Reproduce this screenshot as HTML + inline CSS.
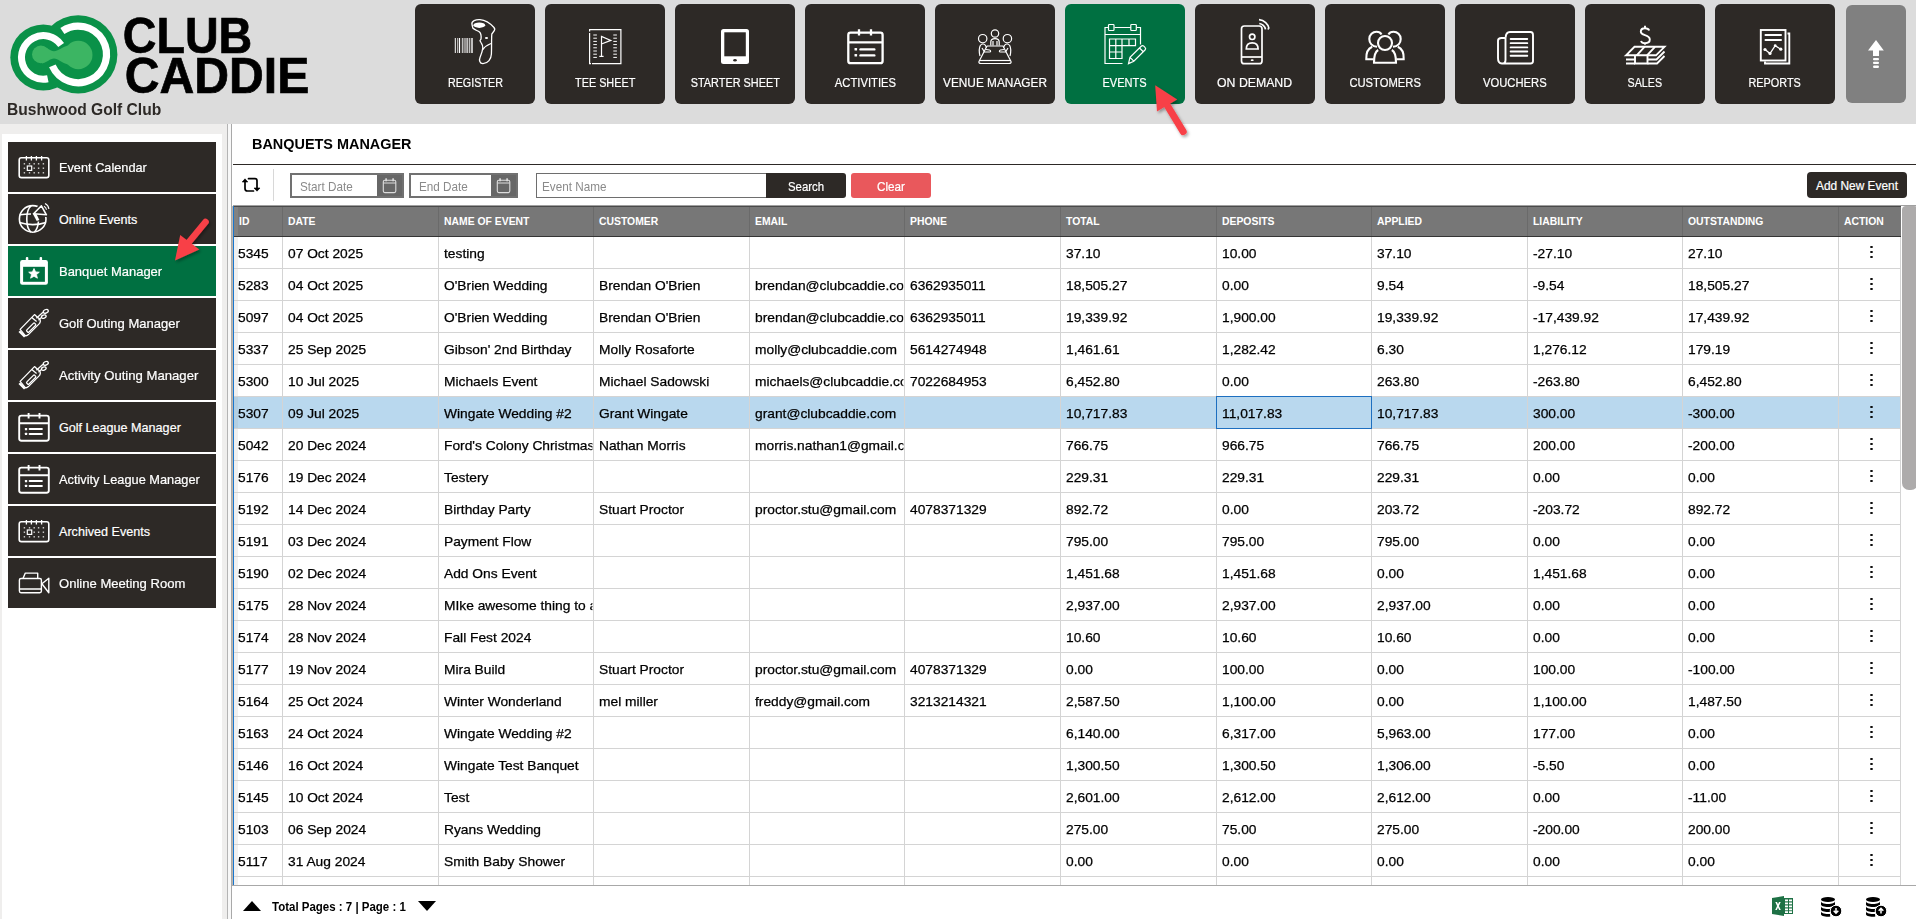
<!DOCTYPE html><html><head><meta charset="utf-8"><style>
*{margin:0;padding:0;box-sizing:border-box}
html,body{width:1916px;height:919px;overflow:hidden;background:#fff;font-family:"Liberation Sans",sans-serif;color:#000}
.a{position:absolute}
.t{position:absolute;white-space:nowrap;line-height:1}
.nb{position:absolute;top:4px;width:120px;height:100px;background:#2d2926;border-radius:6px}
.nb svg{position:absolute;left:30px;top:6px}
.nl{position:absolute;left:0;width:120px;top:73px;text-align:center;color:#fff;-webkit-text-stroke:.2px #fff;font-size:12.3px;line-height:1}
.nl span{display:inline-block;transform:scaleX(.87);transform-origin:50% 50%}
.si{position:absolute;left:8px;width:208px;height:50px;background:#2d2926}
.si svg{position:absolute;left:0;top:0}
.sl{position:absolute;left:51px;top:20px;color:#fff;-webkit-text-stroke:.2px #fff;font-size:12.6px;line-height:1;white-space:nowrap}
.hl{position:absolute;top:207px;height:29px;width:1px;background:#6a6a6a}
.vl{position:absolute;top:237px;height:648px;width:1px;background:#d4d4d4}
.rl{position:absolute;left:233px;width:1667px;height:1px;background:#d4d4d4}
.ht{position:absolute;top:217px;color:#fff;font-weight:bold;font-size:10.4px;line-height:1;white-space:nowrap}
.ct{position:absolute;transform:scaleX(1.06);transform-origin:0 0;font-size:13px;-webkit-text-stroke:.25px #000;line-height:1;white-space:nowrap;overflow:hidden}
.kb{position:absolute;left:1870px;width:3px}
.kb i{display:block;width:3px;height:1.9px;background:#000;border-radius:50%;margin-bottom:2.95px}
</style></head><body>
<div class="a" style="left:0;top:0;width:1916px;height:124px;background:#dcdcdc"></div>
<svg class="a" style="left:0;top:0" width="320" height="124" viewBox="0 0 320 124">
<circle cx="43.3" cy="57.4" r="33" fill="#0a9148"/><circle cx="78.2" cy="54.4" r="39.2" fill="#0a9148"/>
<path d="M61.16 44.9 A21.8 21.8 0 1 0 47.83 78.72" fill="none" stroke="#fff" stroke-width="7"/>
<path d="M62.37 30.94 A28.3 28.3 0 1 1 52.35 65.91" fill="none" stroke="#fff" stroke-width="7.2"/>
<circle cx="40.8" cy="54.4" r="8.8" fill="#3cb563"/><circle cx="78.3" cy="55" r="14.2" fill="#3cb563"/>
<path d="M42 46 C47 47 50 51 54 51.3 C58 51.3 62 47 68 45.5 L68 64.5 C62 63 58 58.5 54 58.5 C50 58.5 47 62.5 42 63.5 Z" fill="#3cb563"/>
<text x="122.8" y="52.8" font-family="Liberation Sans" font-weight="bold" font-size="50" textLength="129.5" lengthAdjust="spacingAndGlyphs" fill="#000" stroke="#000" stroke-width=".7">CLUB</text>
<text x="124.8" y="92.5" font-family="Liberation Sans" font-weight="bold" font-size="50" textLength="184.5" lengthAdjust="spacingAndGlyphs" fill="#000" stroke="#000" stroke-width=".7">CADDIE</text>
</svg>
<div class="t" style="left:7.3px;top:102.2px;font-size:16px;font-weight:bold;color:#2d2926;transform:scaleX(.975);transform-origin:0 0">Bushwood Golf Club</div>
<div class="nb" style="left:415px;background:#2d2926"><svg width="60" height="60" viewBox="0 0 60 60"><g fill="none" stroke="#fff" stroke-width="1.3">
<path d="M27 14.5 C26 11 31 9.3 35 9.6 C40 10 45 13 49 17.5 C50.3 19 49.8 20.5 48.3 22 L46.8 24 C46.4 30 46.7 38 46.4 44 C46.2 49 43 53.5 38 53.6 C34.5 53.7 34 50 35 47.5 C36.5 44 37.5 41 37.8 38 C38 35 37 34 36 32.5 L35 30.8 L36 29 C36.3 26.5 36 23.5 34.5 22 C32.5 20.5 29.5 20 27.8 18 Z"/>
<path d="M37.5 40 C39.5 37 42.5 34.8 46 33.5"/></g>
<ellipse cx="34.3" cy="15.2" rx="5.9" ry="2.7" fill="#fff"/>
<ellipse cx="41.5" cy="28" rx="1.6" ry="1.1" fill="#fff"/>
<g fill="#fff"><rect x="9.8" y="28" width="1" height="15"/><rect x="12" y="28" width="0.8" height="15" opacity=".8"/><rect x="13.8" y="28" width="1.3" height="15"/><rect x="16.8" y="28" width="1.2" height="15" opacity=".7"/><rect x="18.6" y="28" width="1" height="15" opacity=".8"/><rect x="20.3" y="28" width="1.4" height="15" opacity=".7"/><rect x="22.3" y="28" width="0.9" height="15"/><rect x="24" y="28" width="1.3" height="15" opacity=".7"/><rect x="26.3" y="28" width="1.4" height="15"/></g></svg><div class="nl"><span style="transform:scaleX(0.876)">REGISTER</span></div></div>
<div class="nb" style="left:545px;background:#2d2926"><svg width="60" height="60" viewBox="0 0 60 60"><g fill="none" stroke="#fff" stroke-width="1.2">
<path d="M17 53.7 L45.9 53.7 L45.9 19.6 L14.6 19.6 L14.6 21.5 M14.6 23 L14.6 53.7 L16 53.7"/>
<path d="M26.5 46.3 L26.5 26.5 L35.8 30.4 L26.5 34"/><path d="M24.3 46.4 L28.6 46.4"/></g>
<g stroke="#fff" stroke-width="1" stroke-linecap="round"><path d="M18.7 25.0 H21.5 M38.7 25.0 H41.5"/><path d="M18.7 28.2 H21.5 M38.7 28.2 H41.5"/><path d="M18.7 31.4 H21.5 M38.7 31.4 H41.5"/><path d="M18.7 34.6 H21.5 M38.7 34.6 H41.5"/><path d="M18.7 37.8 H21.5 M38.7 37.8 H41.5"/><path d="M18.7 41.0 H21.5 M38.7 41.0 H41.5"/><path d="M18.7 44.2 H21.5 M38.7 44.2 H41.5"/><path d="M18.7 47.4 H21.5 M38.7 47.4 H41.5"/></g></svg><div class="nl"><span style="transform:scaleX(0.881)">TEE SHEET</span></div></div>
<div class="nb" style="left:675px;background:#2d2926"><svg width="60" height="60" viewBox="0 0 60 60"><rect x="16" y="19" width="28" height="35" rx="2.5" fill="#fff"/>
<rect x="19.3" y="22.3" width="21.5" height="24" fill="#2d2926"/>
<ellipse cx="30" cy="50.3" rx="1.8" ry="1.2" fill="#2d2926"/></svg><div class="nl"><span style="transform:scaleX(0.886)">STARTER SHEET</span></div></div>
<div class="nb" style="left:805px;background:#2d2926"><svg width="60" height="60" viewBox="0 0 60 60"><g fill="none" stroke="#fff" stroke-width="2.3">
<rect x="13.3" y="22.7" width="34.3" height="30.5" rx="2.2"/><path d="M13.3 32.3 H47.6"/>
<path d="M24 19.3 V25.6 M36 19.3 V25.6"/></g>
<g fill="#fff"><rect x="19.5" y="38" width="2.6" height="2.6" rx=".6"/><rect x="19.5" y="44" width="2.6" height="2.6" rx=".6"/>
<rect x="24.3" y="38.2" width="16.2" height="2.4" rx="1.2"/><rect x="24.3" y="44.2" width="16.2" height="2.4" rx="1.2"/></g></svg><div class="nl"><span style="transform:scaleX(0.915)">ACTIVITIES</span></div></div>
<div class="nb" style="left:935px;background:#2d2926"><svg width="60" height="60" viewBox="0 0 60 60"><g fill="none" stroke="#fff" stroke-width="1.2">
<circle cx="30" cy="23.5" r="3.7"/><circle cx="17.7" cy="28.7" r="4.2"/><circle cx="42.4" cy="28.7" r="4.2"/>
<path d="M25.8 35.5 V32 C25.8 29.6 27.5 28.6 30 28.6 C32.5 28.6 34.2 29.6 34.2 32 V35.5 M28 35.5 V31 M32 35.5 V31"/>
<path d="M15 46 C14 42 14 38 15.3 35.5 C16.5 33.5 19.5 33.5 20.5 35.5 L21.5 37.5"/>
<path d="M45 46 C46 42 46 38 44.7 35.5 C43.5 33.5 40.5 33.5 39.5 35.5 L38.5 37.5"/>
<path d="M17 38 L19.5 42 L24.5 42 C26 42 26 40.5 24.5 40 L21 39.5"/>
<path d="M43 38 L40.5 42 L35.5 42 C34 42 34 40.5 35.5 40 L39 39.5"/>
<path d="M22 36 L38 36 L46 51.5 C46.5 53 45.5 53.5 44 53.5 L16 53.5 C14.5 53.5 13.5 53 14 51.5 L22 36"/>
<path d="M15 50.5 H45"/></g></svg><div class="nl"><span style="transform:scaleX(0.963)">VENUE MANAGER</span></div></div>
<div class="nb" style="left:1065px;background:#007041"><svg width="60" height="60" viewBox="0 0 60 60"><g fill="none" stroke="#fff" stroke-width="1.2">
<path d="M27.5 53.5 H10 V17.5 H13.5 M19.5 17.5 H35.8 M41.7 17.5 H45.5 V34.5"/>
<path d="M10 24.5 H45.5"/>
<rect x="13.5" y="14.5" width="5.5" height="6" rx=".8"/><rect x="35.8" y="14.5" width="5.5" height="6" rx=".8"/>
<path d="M14.5 29 H40.5 V35.6 H27 V48.5 H14.5 Z M14.5 35.6 H27 M14.5 42 H27 M20.8 29 V48.5 M27 29 V35.6 M34 29 V35.6"/>
<path d="M33.5 53.6 L35 47.3 L46.2 36.2 C47 35.4 48 35.4 48.8 36.2 L50 37.4 C50.8 38.2 50.8 39.2 50 40 L38.8 51.2 Z M35 47.3 L38.8 51.2 M44.5 38 L48.3 41.7"/></g></svg><div class="nl"><span style="transform:scaleX(0.898)">EVENTS</span></div></div>
<div class="nb" style="left:1195px;background:#2d2926"><svg width="60" height="60" viewBox="0 0 60 60"><g fill="none" stroke="#fff" stroke-width="1.7">
<rect x="16.5" y="16" width="20.5" height="37.7" rx="2.8"/><path d="M16.5 47 H37"/>
<circle cx="27.2" cy="26.8" r="2.7"/><path d="M21.3 39 C21.3 34.8 24 32.8 27.2 32.8 C30.4 32.8 33.1 34.8 33.1 39 Z"/>
<path d="M34.3 13.5 C37.2 13.8 40 16.5 40.5 19.3 M34 9.6 C39 10 43.5 14 44 18.6"/></g>
<ellipse cx="27.2" cy="50.2" rx="1.5" ry="0.9" fill="#fff"/><circle cx="43.3" cy="18.8" r="0.9" fill="#fff"/></svg><div class="nl"><span style="transform:scaleX(0.999)">ON DEMAND</span></div></div>
<div class="nb" style="left:1325px;background:#2d2926"><svg width="60" height="60" viewBox="0 0 60 60"><g fill="none" stroke="#fff" stroke-width="2.1">
<path d="M26.5 24.5 C25.5 22.5 23.8 21.8 21.5 21.8 C17.7 21.8 14.3 24.7 14.3 29 C14.3 33 17.2 36.7 22 36.7"/>
<path d="M33.5 24.5 C34.5 22.5 36.2 21.8 38.5 21.8 C42.3 21.8 45.7 24.7 45.7 29 C45.7 33 42.8 36.7 38 36.7"/>
<circle cx="30" cy="33" r="7"/>
<path d="M17.2 36.8 C12 39 11 43.5 11.3 49.3 H18.5"/><path d="M42.8 36.8 C48 39 49 43.5 48.7 49.3 H41.5"/>
<path d="M23.2 40 C19.5 42 19 47 19 52.7 H41 C41 47 40.5 42 36.8 40"/></g></svg><div class="nl"><span style="transform:scaleX(0.913)">CUSTOMERS</span></div></div>
<div class="nb" style="left:1455px;background:#2d2926"><svg width="60" height="60" viewBox="0 0 60 60"><g fill="none" stroke="#fff" stroke-width="1.9">
<path d="M20.7 27.8 C20.7 24 22 22 25 22 H45.5 C47.5 22 48 23 48 25 V51 C48 53 47 53.5 45.5 53.5 H17 C14 53.5 13 51.5 13 48 V30.7 C13 28.5 14 28 16.5 28 H20.7 M20.5 28 V50 C20.5 53 18.5 53.5 17 53.5"/></g>
<g fill="#fff"><rect x="24.7" y="28.0" width="18.5" height="1.9" rx=".9"/><rect x="24.7" y="32.2" width="18.5" height="1.9" rx=".9"/><rect x="24.7" y="36.4" width="18.5" height="1.9" rx=".9"/><rect x="24.7" y="40.6" width="18.5" height="1.9" rx=".9"/><rect x="24.7" y="44.8" width="18.5" height="1.9" rx=".9"/></g></svg><div class="nl"><span style="transform:scaleX(0.915)">VOUCHERS</span></div></div>
<div class="nb" style="left:1585px;background:#2d2926"><svg width="60" height="60" viewBox="0 0 60 60"><path d="M34.2 20.5 C33.5 18.8 32 18.3 30 18.3 C27.5 18.3 25.8 19.8 25.8 21.8 C25.8 26.3 34.8 24 34.8 29.5 C34.8 31.7 33 33.2 30 33.2 C28 33.2 26.5 32.5 26 31 M30 15.7 V18.3 M30 33.2 V34.8" fill="none" stroke="#fff" stroke-width="1.9"/>
<g fill="none" stroke="#fff" stroke-width="1.9">
<path d="M11 45.3 L19.5 36.8 H49.5 L41 45.3 Z"/><path d="M21.7 45.3 L29.5 36.8 M32 45.3 L40 36.8"/>
<path d="M11 49.5 H20 M32.5 49.5 H41.5 L49.5 41.5"/><path d="M11 53.5 H20 M32.5 53.5 H42 L49.5 46"/>
<path d="M20 45.3 V53.5 H32.5 V45.3"/></g></svg><div class="nl"><span style="transform:scaleX(0.872)">SALES</span></div></div>
<div class="nb" style="left:1715px;background:#2d2926"><svg width="60" height="60" viewBox="0 0 60 60"><g fill="none" stroke="#fff" stroke-width="1.9">
<rect x="15.8" y="20" width="24.7" height="30.5"/><path d="M42.5 23.5 H44.3 V53.5 H20 V51.5"/></g>
<g fill="#fff"><rect x="19.5" y="24" width="17.5" height="1.9" rx=".9"/><rect x="19.5" y="29" width="17.5" height="1.9" rx=".9"/>
<circle cx="20" cy="39.5" r="1.6"/><circle cx="25" cy="43.5" r="1.6"/><circle cx="30.2" cy="35.7" r="1.4"/><circle cx="35.8" cy="39.2" r="1.6"/></g>
<path d="M20 39.5 L25 43.5 L30.2 35.7 L35.8 39.2" fill="none" stroke="#fff" stroke-width="1.3"/></svg><div class="nl"><span style="transform:scaleX(0.885)">REPORTS</span></div></div>
<div class="a" style="left:1846px;top:5px;width:60px;height:98px;background:#808080;border-radius:6px"></div>
<svg class="a" style="left:1846px;top:20px" width="60" height="60" viewBox="0 0 60 60">
<path d="M30 20 L37.8 30.5 H33 V36 H27 V30.5 H22 Z" fill="#fff"/>
<rect x="27" y="38" width="6" height="2.2" rx="1" fill="#fff"/><rect x="27" y="41.8" width="6" height="2.2" rx="1" fill="#fff"/><rect x="27" y="45.6" width="6" height="2.4" rx="1.2" fill="#fff"/>
</svg>
<div class="a" style="left:0;top:124px;width:232px;height:795px;background:#efeeed"></div>
<div class="a" style="left:2px;top:134px;width:220px;height:785px;background:#fff"></div>
<div class="a" style="left:227px;top:124px;width:1px;height:795px;background:#b4b4b4"></div>
<div class="a" style="left:228px;top:124px;width:3px;height:795px;background:#f8f8f8"></div>
<div class="a" style="left:231px;top:124px;width:1px;height:795px;background:#a9a9a9"></div>
<div class="a" style="left:232px;top:206px;width:1px;height:680px;background:#bdb6b0"></div>
<div class="si" style="top:142px;background:#2d2926"><svg width="50" height="50" viewBox="0 0 50 50"><rect x="11.2" y="15.7" width="29.6" height="19.9" rx="2.2" fill="none" stroke="#fff" stroke-width="1.6"/>
<g stroke="#fff" stroke-width="1.3"><path d="M18.4 14 V18.4 M23.4 14 V18.4 M28.4 14 V18.4 M33.6 14 V18.4"/></g>
<g fill="#fff"><rect x="15.7" y="21.1" width="1.4" height="1.4" opacity=".8"/><rect x="20.8" y="21.1" width="1.4" height="1.4" opacity=".8"/><rect x="25.5" y="21.1" width="1.4" height="1.4" opacity=".8"/><rect x="29.9" y="21.1" width="1.4" height="1.4" opacity=".8"/><rect x="34.7" y="21.1" width="1.4" height="1.4" opacity=".8"/><rect x="15.7" y="25.5" width="1.4" height="1.4" opacity=".8"/><rect x="25.5" y="25.5" width="1.4" height="1.4" opacity=".8"/><rect x="29.9" y="25.5" width="1.4" height="1.4" opacity=".8"/><rect x="34.7" y="25.5" width="1.4" height="1.4" opacity=".8"/><rect x="15.7" y="30.1" width="1.4" height="1.4" opacity=".8"/><rect x="20.8" y="30.1" width="1.4" height="1.4" opacity=".8"/><rect x="25.5" y="30.1" width="1.4" height="1.4" opacity=".8"/><rect x="29.9" y="30.1" width="1.4" height="1.4" opacity=".8"/><rect x="34.7" y="30.1" width="1.4" height="1.4" opacity=".8"/></g>
<rect x="19.3" y="24" width="4.4" height="4.4" fill="none" stroke="#fff" stroke-width="1.2"/></svg><div class="sl" style="transform:scaleX(1.012);transform-origin:0 0">Event Calendar</div></div>
<div class="si" style="top:194px;background:#2d2926"><svg width="50" height="50" viewBox="0 0 50 50"><g fill="none" stroke="#fff" stroke-width="1.6"><circle cx="24.7" cy="24.9" r="13.3"/>
<path d="M23.2 11.8 C17.3 16 17.3 34 23.2 38.1"/><path d="M30.4 27.5 C30.2 31.5 29 35.5 26.3 38.1"/>
<path d="M11.9 20.8 C15 20.3 19 20 23 20"/><path d="M11.5 28.5 C16 30 20 30.6 24.7 30.6 C29.5 30.6 34 29.8 37.9 28.4"/></g>
<path d="M25.6 19.7 L33.4 11.8 L38.4 20.8 Z" fill="#2d2926" stroke="#2d2926" stroke-width="4.5" stroke-linejoin="round"/><path d="M25.6 19.7 L33.4 11.8 L38.4 20.8 Z" fill="#2d2926" stroke="#fff" stroke-width="1.6" stroke-linejoin="round"/>
<path d="M24.6 19.2 L28.2 19.6 L31.4 25.9 L28.7 26.9 Z" fill="#fff"/>
<path d="M36 12.2 C37.5 13 38.3 14.3 38.5 15.8 M37 9.5 C39.3 10.6 40.6 12.6 40.9 15" fill="none" stroke="#fff" stroke-width="1.1"/></svg><div class="sl" style="transform:scaleX(1);transform-origin:0 0">Online Events</div></div>
<div class="si" style="top:246px;background:#007041"><svg width="50" height="50" viewBox="0 0 50 50"><rect x="12.1" y="14" width="27.8" height="24.8" rx="2.2" fill="#fff"/><rect x="17.8" y="11" width="2.5" height="4" rx="1" fill="#fff"/><rect x="31.6" y="11" width="2.5" height="4" rx="1" fill="#fff"/>
<rect x="15.1" y="20.8" width="21.8" height="15" fill="#007041"/>
<path d="M26 22.5 L27.6 25.9 L31.3 26.2 L28.5 28.6 L29.4 32.2 L26 30.3 L22.6 32.2 L23.5 28.6 L20.7 26.2 L24.4 25.9 Z" fill="#fff" stroke="#fff" stroke-width=".8" stroke-linejoin="round"/></svg><div class="sl" style="transform:scaleX(1.03);transform-origin:0 0">Banquet Manager</div></div>
<div class="si" style="top:298px;background:#2d2926"><svg width="50" height="50" viewBox="0 0 50 50"><g fill="none" stroke="#fff" stroke-width="1.3" stroke-linejoin="round"><path d="M12.1 31.4 L26.5 16.6 L29.9 19.7 C32.5 21 33 23 31.6 25.4 L20.4 36.6 C19.3 37.6 18.3 38 17.3 37.6 Z"/>
<path d="M11.3 33.3 L16.8 38.8" stroke-width="2.2"/><path d="M23.8 19.4 L28.6 23.6"/>
<rect x="17.6" y="28.2" width="11.2" height="3" rx="1" transform="rotate(-45 23.2 29.7)"/>
<path d="M28.4 20.3 L35 14.3 M30.5 22.3 L33.5 19.4"/>
<ellipse cx="37.8" cy="13.3" rx="2.6" ry="1.7" transform="rotate(-25 37.8 13.3)"/><ellipse cx="35.8" cy="18.6" rx="2.4" ry="1.6" transform="rotate(-20 35.8 18.6)"/></g></svg><div class="sl" style="transform:scaleX(1.033);transform-origin:0 0">Golf Outing Manager</div></div>
<div class="si" style="top:350px;background:#2d2926"><svg width="50" height="50" viewBox="0 0 50 50"><g fill="none" stroke="#fff" stroke-width="1.3" stroke-linejoin="round"><path d="M12.1 31.4 L26.5 16.6 L29.9 19.7 C32.5 21 33 23 31.6 25.4 L20.4 36.6 C19.3 37.6 18.3 38 17.3 37.6 Z"/>
<path d="M11.3 33.3 L16.8 38.8" stroke-width="2.2"/><path d="M23.8 19.4 L28.6 23.6"/>
<rect x="17.6" y="28.2" width="11.2" height="3" rx="1" transform="rotate(-45 23.2 29.7)"/>
<path d="M28.4 20.3 L35 14.3 M30.5 22.3 L33.5 19.4"/>
<ellipse cx="37.8" cy="13.3" rx="2.6" ry="1.7" transform="rotate(-25 37.8 13.3)"/><ellipse cx="35.8" cy="18.6" rx="2.4" ry="1.6" transform="rotate(-20 35.8 18.6)"/></g></svg><div class="sl" style="transform:scaleX(1.042);transform-origin:0 0">Activity Outing Manager</div></div>
<div class="si" style="top:402px;background:#2d2926"><svg width="50" height="50" viewBox="0 0 50 50"><g fill="none" stroke="#fff" stroke-width="1.9"><rect x="11.2" y="13.6" width="29.6" height="25.2" rx="2.2"/><path d="M11.2 21.2 H40.8 M20.6 11 V16.6 M31.5 11 V16.6"/></g>
<g fill="#fff"><rect x="16.9" y="25.9" width="2.3" height="2.3" rx=".5"/><rect x="16.9" y="30.8" width="2.3" height="2.3" rx=".5"/><rect x="20.6" y="26" width="14.3" height="2.1" rx="1"/><rect x="20.6" y="30.9" width="14.3" height="2.1" rx="1"/></g></svg><div class="sl" style="transform:scaleX(1);transform-origin:0 0">Golf League Manager</div></div>
<div class="si" style="top:454px;background:#2d2926"><svg width="50" height="50" viewBox="0 0 50 50"><g fill="none" stroke="#fff" stroke-width="1.9"><rect x="11.2" y="13.6" width="29.6" height="25.2" rx="2.2"/><path d="M11.2 21.2 H40.8 M20.6 11 V16.6 M31.5 11 V16.6"/></g>
<g fill="#fff"><rect x="16.9" y="25.9" width="2.3" height="2.3" rx=".5"/><rect x="16.9" y="30.8" width="2.3" height="2.3" rx=".5"/><rect x="20.6" y="26" width="14.3" height="2.1" rx="1"/><rect x="20.6" y="30.9" width="14.3" height="2.1" rx="1"/></g></svg><div class="sl" style="transform:scaleX(1.016);transform-origin:0 0">Activity League Manager</div></div>
<div class="si" style="top:506px;background:#2d2926"><svg width="50" height="50" viewBox="0 0 50 50"><rect x="11.2" y="15.7" width="29.6" height="19.9" rx="2.2" fill="none" stroke="#fff" stroke-width="1.6"/>
<g stroke="#fff" stroke-width="1.3"><path d="M18.4 14 V18.4 M23.4 14 V18.4 M28.4 14 V18.4 M33.6 14 V18.4"/></g>
<g fill="#fff"><rect x="15.7" y="21.1" width="1.4" height="1.4" opacity=".8"/><rect x="20.8" y="21.1" width="1.4" height="1.4" opacity=".8"/><rect x="25.5" y="21.1" width="1.4" height="1.4" opacity=".8"/><rect x="29.9" y="21.1" width="1.4" height="1.4" opacity=".8"/><rect x="34.7" y="21.1" width="1.4" height="1.4" opacity=".8"/><rect x="15.7" y="25.5" width="1.4" height="1.4" opacity=".8"/><rect x="25.5" y="25.5" width="1.4" height="1.4" opacity=".8"/><rect x="29.9" y="25.5" width="1.4" height="1.4" opacity=".8"/><rect x="34.7" y="25.5" width="1.4" height="1.4" opacity=".8"/><rect x="15.7" y="30.1" width="1.4" height="1.4" opacity=".8"/><rect x="20.8" y="30.1" width="1.4" height="1.4" opacity=".8"/><rect x="25.5" y="30.1" width="1.4" height="1.4" opacity=".8"/><rect x="29.9" y="30.1" width="1.4" height="1.4" opacity=".8"/><rect x="34.7" y="30.1" width="1.4" height="1.4" opacity=".8"/></g>
<rect x="19.3" y="24" width="4.4" height="4.4" fill="none" stroke="#fff" stroke-width="1.2"/></svg><div class="sl" style="transform:scaleX(1);transform-origin:0 0">Archived Events</div></div>
<div class="si" style="top:558px;background:#2d2926"><svg width="50" height="50" viewBox="0 0 50 50"><g fill="none" stroke="#fff" stroke-width="1.4" stroke-linejoin="round"><rect x="11.4" y="20.5" width="22" height="14.2" rx="1.6"/><path d="M15.1 20.3 L17.3 15.1 H29.7 V20.3 M11.4 31 H33.4 M33.9 25.8 L40.8 20.3 V34.7 Z"/></g></svg><div class="sl" style="transform:scaleX(1.037);transform-origin:0 0">Online Meeting Room</div></div>
<div class="t" style="left:252px;top:136px;font-size:15px;font-weight:bold;color:#000;transform:scaleX(.962);transform-origin:0 0">BANQUETS MANAGER</div>
<div class="a" style="left:233px;top:164px;width:1683px;height:1px;background:#2d2926"></div>
<svg class="a" style="left:240px;top:175px" width="24" height="20" viewBox="0 0 24 20">
<path d="M5 6.5 V13.5 C5 15 6 16 7.5 16 H13.5 M8.5 3.65 H15 C16.2 3.65 17 4.5 17 5.7 V13" fill="none" stroke="#000" stroke-width="1.7" stroke-linecap="round"/>
<path d="M2.2 7 L5 3.8 L7.8 7 Z M14 13 L17 16.2 L20 13 Z" fill="#000" stroke="#000" stroke-width=".6" stroke-linejoin="round"/></svg>
<div class="a" style="left:273px;top:169px;width:1px;height:32px;background:#d8d8d8"></div>
<div class="a" style="left:290px;top:173px;width:114px;height:25px;border:2px solid #717171;background:#fff"></div>
<div class="a" style="left:377px;top:175px;width:25px;height:21px;background:#676767"></div>
<svg class="a" style="left:377px;top:175px" width="25" height="21" viewBox="0 0 25 21"><rect x="6.3" y="5.3" width="12.5" height="12.3" rx="1.5" fill="none" stroke="#ddd" stroke-width="1.1"/><path d="M6.3 8 H18.8" stroke="#ddd" stroke-width="1"/><rect x="8.3" y="3.3" width="1.6" height="3" fill="#ddd"/><rect x="15.3" y="3.3" width="1.6" height="3" fill="#ddd"/></svg>
<div class="t" style="left:300px;top:181px;font-size:12.6px;color:#8a8a8a;transform:scaleX(.93);transform-origin:0 0">Start Date</div>
<div class="a" style="left:409px;top:173px;width:109px;height:25px;border:2px solid #717171;background:#fff"></div>
<div class="a" style="left:491px;top:175px;width:25px;height:21px;background:#676767"></div>
<svg class="a" style="left:491px;top:175px" width="25" height="21" viewBox="0 0 25 21"><rect x="6.3" y="5.3" width="12.5" height="12.3" rx="1.5" fill="none" stroke="#ddd" stroke-width="1.1"/><path d="M6.3 8 H18.8" stroke="#ddd" stroke-width="1"/><rect x="8.3" y="3.3" width="1.6" height="3" fill="#ddd"/><rect x="15.3" y="3.3" width="1.6" height="3" fill="#ddd"/></svg>
<div class="t" style="left:419px;top:181px;font-size:12.6px;color:#8a8a8a;transform:scaleX(.93);transform-origin:0 0">End Date</div>
<div class="a" style="left:536px;top:173px;width:231px;height:25px;border:1px solid #6e6e6e;background:#fff"></div>
<div class="t" style="left:542px;top:180.5px;font-size:12.6px;color:#8a8a8a;transform:scaleX(.93);transform-origin:0 0">Event Name</div>
<div class="a" style="left:766px;top:173px;width:80px;height:25px;background:#2d2926;border-radius:0 3px 3px 0"></div>
<div class="t" style="left:788px;top:181px;font-size:12.4px;color:#fff;-webkit-text-stroke:.2px #fff;transform:scaleX(.92);transform-origin:0 0">Search</div>
<div class="a" style="left:851px;top:173px;width:80px;height:25px;background:#e9585c;border-radius:3px"></div>
<div class="t" style="left:877px;top:181px;font-size:12.4px;color:#fff;-webkit-text-stroke:.2px #fff;transform:scaleX(.944);transform-origin:0 0">Clear</div>
<div class="a" style="left:1807px;top:172px;width:100px;height:26px;background:#2d2926;border-radius:4px"></div>
<div class="t" style="left:1816px;top:181px;font-size:11.9px;color:#fff;-webkit-text-stroke:.2px #fff">Add New Event</div>
<div class="a" style="left:233px;top:205px;width:1683px;height:1px;background:#a0a0a0"></div>
<div class="a" style="left:233px;top:206px;width:1668px;height:31px;background:#777;border-top:1px solid #4a4a4a;border-bottom:1px solid #353535"></div>
<div class="a" style="left:234px;top:207px;width:4px;height:29px;background:#828282"></div>
<div class="hl" style="left:282px"></div>
<div class="hl" style="left:438px"></div>
<div class="hl" style="left:593px"></div>
<div class="hl" style="left:749px"></div>
<div class="hl" style="left:904px"></div>
<div class="hl" style="left:1060px"></div>
<div class="hl" style="left:1216px"></div>
<div class="hl" style="left:1371px"></div>
<div class="hl" style="left:1527px"></div>
<div class="hl" style="left:1682px"></div>
<div class="hl" style="left:1838px"></div>
<div class="a" style="left:233px;top:397px;width:1667px;height:32px;background:#b9d8ee"></div>
<div class="a" style="left:234px;top:237px;width:4px;height:648px;background:#f0f0f0"></div>
<div class="a" style="left:234px;top:397px;width:4px;height:32px;background:#b3cfe2"></div>
<div class="vl" style="left:282px"></div>
<div class="vl" style="left:438px"></div>
<div class="vl" style="left:593px"></div>
<div class="vl" style="left:749px"></div>
<div class="vl" style="left:904px"></div>
<div class="vl" style="left:1060px"></div>
<div class="vl" style="left:1216px"></div>
<div class="vl" style="left:1371px"></div>
<div class="vl" style="left:1527px"></div>
<div class="vl" style="left:1682px"></div>
<div class="vl" style="left:1838px"></div>
<div class="vl" style="left:1900px"></div>
<div class="rl" style="top:268px"></div>
<div class="rl" style="top:300px"></div>
<div class="rl" style="top:332px"></div>
<div class="rl" style="top:364px"></div>
<div class="rl" style="top:396px"></div>
<div class="rl" style="top:428px"></div>
<div class="rl" style="top:460px"></div>
<div class="rl" style="top:492px"></div>
<div class="rl" style="top:524px"></div>
<div class="rl" style="top:556px"></div>
<div class="rl" style="top:588px"></div>
<div class="rl" style="top:620px"></div>
<div class="rl" style="top:652px"></div>
<div class="rl" style="top:684px"></div>
<div class="rl" style="top:716px"></div>
<div class="rl" style="top:748px"></div>
<div class="rl" style="top:780px"></div>
<div class="rl" style="top:812px"></div>
<div class="rl" style="top:844px"></div>
<div class="rl" style="top:876px"></div>
<div class="a" style="left:1216px;top:396px;width:156px;height:33px;border:1.5px solid #1d6fc0"></div>
<div class="a" style="left:233px;top:206px;width:1px;height:680px;background:#1877cf"></div>
<div class="a" style="left:232px;top:885px;width:1684px;height:1px;background:#a8a8a8"></div>
<div class="ht" style="left:239px">ID</div>
<div class="ht" style="left:288px">DATE</div>
<div class="ht" style="left:444px">NAME OF EVENT</div>
<div class="ht" style="left:599px">CUSTOMER</div>
<div class="ht" style="left:755px">EMAIL</div>
<div class="ht" style="left:910px">PHONE</div>
<div class="ht" style="left:1066px">TOTAL</div>
<div class="ht" style="left:1222px">DEPOSITS</div>
<div class="ht" style="left:1377px">APPLIED</div>
<div class="ht" style="left:1533px">LIABILITY</div>
<div class="ht" style="left:1688px">OUTSTANDING</div>
<div class="ht" style="left:1844px">ACTION</div>
<div class="ct" style="left:238px;top:246.9px;width:40.6px;height:17px">5345</div>
<div class="ct" style="left:288px;top:246.9px;width:140.6px;height:17px">07 Oct 2025</div>
<div class="ct" style="left:444px;top:246.9px;width:139.6px;height:17px">testing</div>
<div class="ct" style="left:1066px;top:246.9px;width:140.6px;height:17px">37.10</div>
<div class="ct" style="left:1222px;top:246.9px;width:139.6px;height:17px">10.00</div>
<div class="ct" style="left:1377px;top:246.9px;width:140.6px;height:17px">37.10</div>
<div class="ct" style="left:1533px;top:246.9px;width:139.6px;height:17px">-27.10</div>
<div class="ct" style="left:1688px;top:246.9px;width:140.6px;height:17px">27.10</div>
<div class="kb" style="top:246.4px"><i></i><i></i><i></i></div>
<div class="ct" style="left:238px;top:278.9px;width:40.6px;height:17px">5283</div>
<div class="ct" style="left:288px;top:278.9px;width:140.6px;height:17px">04 Oct 2025</div>
<div class="ct" style="left:444px;top:278.9px;width:139.6px;height:17px">O'Brien Wedding</div>
<div class="ct" style="left:599px;top:278.9px;width:140.6px;height:17px">Brendan O'Brien</div>
<div class="ct" style="left:755px;top:278.9px;width:139.6px;height:17px">brendan@clubcaddie.com</div>
<div class="ct" style="left:910px;top:278.9px;width:140.6px;height:17px">6362935011</div>
<div class="ct" style="left:1066px;top:278.9px;width:140.6px;height:17px">18,505.27</div>
<div class="ct" style="left:1222px;top:278.9px;width:139.6px;height:17px">0.00</div>
<div class="ct" style="left:1377px;top:278.9px;width:140.6px;height:17px">9.54</div>
<div class="ct" style="left:1533px;top:278.9px;width:139.6px;height:17px">-9.54</div>
<div class="ct" style="left:1688px;top:278.9px;width:140.6px;height:17px">18,505.27</div>
<div class="kb" style="top:278.4px"><i></i><i></i><i></i></div>
<div class="ct" style="left:238px;top:310.9px;width:40.6px;height:17px">5097</div>
<div class="ct" style="left:288px;top:310.9px;width:140.6px;height:17px">04 Oct 2025</div>
<div class="ct" style="left:444px;top:310.9px;width:139.6px;height:17px">O'Brien Wedding</div>
<div class="ct" style="left:599px;top:310.9px;width:140.6px;height:17px">Brendan O'Brien</div>
<div class="ct" style="left:755px;top:310.9px;width:139.6px;height:17px">brendan@clubcaddie.com</div>
<div class="ct" style="left:910px;top:310.9px;width:140.6px;height:17px">6362935011</div>
<div class="ct" style="left:1066px;top:310.9px;width:140.6px;height:17px">19,339.92</div>
<div class="ct" style="left:1222px;top:310.9px;width:139.6px;height:17px">1,900.00</div>
<div class="ct" style="left:1377px;top:310.9px;width:140.6px;height:17px">19,339.92</div>
<div class="ct" style="left:1533px;top:310.9px;width:139.6px;height:17px">-17,439.92</div>
<div class="ct" style="left:1688px;top:310.9px;width:140.6px;height:17px">17,439.92</div>
<div class="kb" style="top:310.4px"><i></i><i></i><i></i></div>
<div class="ct" style="left:238px;top:342.9px;width:40.6px;height:17px">5337</div>
<div class="ct" style="left:288px;top:342.9px;width:140.6px;height:17px">25 Sep 2025</div>
<div class="ct" style="left:444px;top:342.9px;width:139.6px;height:17px">Gibson' 2nd Birthday</div>
<div class="ct" style="left:599px;top:342.9px;width:140.6px;height:17px">Molly Rosaforte</div>
<div class="ct" style="left:755px;top:342.9px;width:139.6px;height:17px">molly@clubcaddie.com</div>
<div class="ct" style="left:910px;top:342.9px;width:140.6px;height:17px">5614274948</div>
<div class="ct" style="left:1066px;top:342.9px;width:140.6px;height:17px">1,461.61</div>
<div class="ct" style="left:1222px;top:342.9px;width:139.6px;height:17px">1,282.42</div>
<div class="ct" style="left:1377px;top:342.9px;width:140.6px;height:17px">6.30</div>
<div class="ct" style="left:1533px;top:342.9px;width:139.6px;height:17px">1,276.12</div>
<div class="ct" style="left:1688px;top:342.9px;width:140.6px;height:17px">179.19</div>
<div class="kb" style="top:342.4px"><i></i><i></i><i></i></div>
<div class="ct" style="left:238px;top:374.9px;width:40.6px;height:17px">5300</div>
<div class="ct" style="left:288px;top:374.9px;width:140.6px;height:17px">10 Jul 2025</div>
<div class="ct" style="left:444px;top:374.9px;width:139.6px;height:17px">Michaels Event</div>
<div class="ct" style="left:599px;top:374.9px;width:140.6px;height:17px">Michael Sadowski</div>
<div class="ct" style="left:755px;top:374.9px;width:139.6px;height:17px">michaels@clubcaddie.com</div>
<div class="ct" style="left:910px;top:374.9px;width:140.6px;height:17px">7022684953</div>
<div class="ct" style="left:1066px;top:374.9px;width:140.6px;height:17px">6,452.80</div>
<div class="ct" style="left:1222px;top:374.9px;width:139.6px;height:17px">0.00</div>
<div class="ct" style="left:1377px;top:374.9px;width:140.6px;height:17px">263.80</div>
<div class="ct" style="left:1533px;top:374.9px;width:139.6px;height:17px">-263.80</div>
<div class="ct" style="left:1688px;top:374.9px;width:140.6px;height:17px">6,452.80</div>
<div class="kb" style="top:374.4px"><i></i><i></i><i></i></div>
<div class="ct" style="left:238px;top:406.9px;width:40.6px;height:17px">5307</div>
<div class="ct" style="left:288px;top:406.9px;width:140.6px;height:17px">09 Jul 2025</div>
<div class="ct" style="left:444px;top:406.9px;width:139.6px;height:17px">Wingate Wedding #2</div>
<div class="ct" style="left:599px;top:406.9px;width:140.6px;height:17px">Grant Wingate</div>
<div class="ct" style="left:755px;top:406.9px;width:139.6px;height:17px">grant@clubcaddie.com</div>
<div class="ct" style="left:1066px;top:406.9px;width:140.6px;height:17px">10,717.83</div>
<div class="ct" style="left:1222px;top:406.9px;width:139.6px;height:17px">11,017.83</div>
<div class="ct" style="left:1377px;top:406.9px;width:140.6px;height:17px">10,717.83</div>
<div class="ct" style="left:1533px;top:406.9px;width:139.6px;height:17px">300.00</div>
<div class="ct" style="left:1688px;top:406.9px;width:140.6px;height:17px">-300.00</div>
<div class="kb" style="top:406.4px"><i></i><i></i><i></i></div>
<div class="ct" style="left:238px;top:438.9px;width:40.6px;height:17px">5042</div>
<div class="ct" style="left:288px;top:438.9px;width:140.6px;height:17px">20 Dec 2024</div>
<div class="ct" style="left:444px;top:438.9px;width:139.6px;height:17px">Ford's Colony Christmas</div>
<div class="ct" style="left:599px;top:438.9px;width:140.6px;height:17px">Nathan Morris</div>
<div class="ct" style="left:755px;top:438.9px;width:139.6px;height:17px">morris.nathan1@gmail.com</div>
<div class="ct" style="left:1066px;top:438.9px;width:140.6px;height:17px">766.75</div>
<div class="ct" style="left:1222px;top:438.9px;width:139.6px;height:17px">966.75</div>
<div class="ct" style="left:1377px;top:438.9px;width:140.6px;height:17px">766.75</div>
<div class="ct" style="left:1533px;top:438.9px;width:139.6px;height:17px">200.00</div>
<div class="ct" style="left:1688px;top:438.9px;width:140.6px;height:17px">-200.00</div>
<div class="kb" style="top:438.4px"><i></i><i></i><i></i></div>
<div class="ct" style="left:238px;top:470.9px;width:40.6px;height:17px">5176</div>
<div class="ct" style="left:288px;top:470.9px;width:140.6px;height:17px">19 Dec 2024</div>
<div class="ct" style="left:444px;top:470.9px;width:139.6px;height:17px">Testery</div>
<div class="ct" style="left:1066px;top:470.9px;width:140.6px;height:17px">229.31</div>
<div class="ct" style="left:1222px;top:470.9px;width:139.6px;height:17px">229.31</div>
<div class="ct" style="left:1377px;top:470.9px;width:140.6px;height:17px">229.31</div>
<div class="ct" style="left:1533px;top:470.9px;width:139.6px;height:17px">0.00</div>
<div class="ct" style="left:1688px;top:470.9px;width:140.6px;height:17px">0.00</div>
<div class="kb" style="top:470.4px"><i></i><i></i><i></i></div>
<div class="ct" style="left:238px;top:502.9px;width:40.6px;height:17px">5192</div>
<div class="ct" style="left:288px;top:502.9px;width:140.6px;height:17px">14 Dec 2024</div>
<div class="ct" style="left:444px;top:502.9px;width:139.6px;height:17px">Birthday Party</div>
<div class="ct" style="left:599px;top:502.9px;width:140.6px;height:17px">Stuart Proctor</div>
<div class="ct" style="left:755px;top:502.9px;width:139.6px;height:17px">proctor.stu@gmail.com</div>
<div class="ct" style="left:910px;top:502.9px;width:140.6px;height:17px">4078371329</div>
<div class="ct" style="left:1066px;top:502.9px;width:140.6px;height:17px">892.72</div>
<div class="ct" style="left:1222px;top:502.9px;width:139.6px;height:17px">0.00</div>
<div class="ct" style="left:1377px;top:502.9px;width:140.6px;height:17px">203.72</div>
<div class="ct" style="left:1533px;top:502.9px;width:139.6px;height:17px">-203.72</div>
<div class="ct" style="left:1688px;top:502.9px;width:140.6px;height:17px">892.72</div>
<div class="kb" style="top:502.4px"><i></i><i></i><i></i></div>
<div class="ct" style="left:238px;top:534.9px;width:40.6px;height:17px">5191</div>
<div class="ct" style="left:288px;top:534.9px;width:140.6px;height:17px">03 Dec 2024</div>
<div class="ct" style="left:444px;top:534.9px;width:139.6px;height:17px">Payment Flow</div>
<div class="ct" style="left:1066px;top:534.9px;width:140.6px;height:17px">795.00</div>
<div class="ct" style="left:1222px;top:534.9px;width:139.6px;height:17px">795.00</div>
<div class="ct" style="left:1377px;top:534.9px;width:140.6px;height:17px">795.00</div>
<div class="ct" style="left:1533px;top:534.9px;width:139.6px;height:17px">0.00</div>
<div class="ct" style="left:1688px;top:534.9px;width:140.6px;height:17px">0.00</div>
<div class="kb" style="top:534.4px"><i></i><i></i><i></i></div>
<div class="ct" style="left:238px;top:566.9px;width:40.6px;height:17px">5190</div>
<div class="ct" style="left:288px;top:566.9px;width:140.6px;height:17px">02 Dec 2024</div>
<div class="ct" style="left:444px;top:566.9px;width:139.6px;height:17px">Add Ons Event</div>
<div class="ct" style="left:1066px;top:566.9px;width:140.6px;height:17px">1,451.68</div>
<div class="ct" style="left:1222px;top:566.9px;width:139.6px;height:17px">1,451.68</div>
<div class="ct" style="left:1377px;top:566.9px;width:140.6px;height:17px">0.00</div>
<div class="ct" style="left:1533px;top:566.9px;width:139.6px;height:17px">1,451.68</div>
<div class="ct" style="left:1688px;top:566.9px;width:140.6px;height:17px">0.00</div>
<div class="kb" style="top:566.4px"><i></i><i></i><i></i></div>
<div class="ct" style="left:238px;top:598.9px;width:40.6px;height:17px">5175</div>
<div class="ct" style="left:288px;top:598.9px;width:140.6px;height:17px">28 Nov 2024</div>
<div class="ct" style="left:444px;top:598.9px;width:139.6px;height:17px">MIke awesome thing to a party</div>
<div class="ct" style="left:1066px;top:598.9px;width:140.6px;height:17px">2,937.00</div>
<div class="ct" style="left:1222px;top:598.9px;width:139.6px;height:17px">2,937.00</div>
<div class="ct" style="left:1377px;top:598.9px;width:140.6px;height:17px">2,937.00</div>
<div class="ct" style="left:1533px;top:598.9px;width:139.6px;height:17px">0.00</div>
<div class="ct" style="left:1688px;top:598.9px;width:140.6px;height:17px">0.00</div>
<div class="kb" style="top:598.4px"><i></i><i></i><i></i></div>
<div class="ct" style="left:238px;top:630.9px;width:40.6px;height:17px">5174</div>
<div class="ct" style="left:288px;top:630.9px;width:140.6px;height:17px">28 Nov 2024</div>
<div class="ct" style="left:444px;top:630.9px;width:139.6px;height:17px">Fall Fest 2024</div>
<div class="ct" style="left:1066px;top:630.9px;width:140.6px;height:17px">10.60</div>
<div class="ct" style="left:1222px;top:630.9px;width:139.6px;height:17px">10.60</div>
<div class="ct" style="left:1377px;top:630.9px;width:140.6px;height:17px">10.60</div>
<div class="ct" style="left:1533px;top:630.9px;width:139.6px;height:17px">0.00</div>
<div class="ct" style="left:1688px;top:630.9px;width:140.6px;height:17px">0.00</div>
<div class="kb" style="top:630.4px"><i></i><i></i><i></i></div>
<div class="ct" style="left:238px;top:662.9px;width:40.6px;height:17px">5177</div>
<div class="ct" style="left:288px;top:662.9px;width:140.6px;height:17px">19 Nov 2024</div>
<div class="ct" style="left:444px;top:662.9px;width:139.6px;height:17px">Mira Build</div>
<div class="ct" style="left:599px;top:662.9px;width:140.6px;height:17px">Stuart Proctor</div>
<div class="ct" style="left:755px;top:662.9px;width:139.6px;height:17px">proctor.stu@gmail.com</div>
<div class="ct" style="left:910px;top:662.9px;width:140.6px;height:17px">4078371329</div>
<div class="ct" style="left:1066px;top:662.9px;width:140.6px;height:17px">0.00</div>
<div class="ct" style="left:1222px;top:662.9px;width:139.6px;height:17px">100.00</div>
<div class="ct" style="left:1377px;top:662.9px;width:140.6px;height:17px">0.00</div>
<div class="ct" style="left:1533px;top:662.9px;width:139.6px;height:17px">100.00</div>
<div class="ct" style="left:1688px;top:662.9px;width:140.6px;height:17px">-100.00</div>
<div class="kb" style="top:662.4px"><i></i><i></i><i></i></div>
<div class="ct" style="left:238px;top:694.9px;width:40.6px;height:17px">5164</div>
<div class="ct" style="left:288px;top:694.9px;width:140.6px;height:17px">25 Oct 2024</div>
<div class="ct" style="left:444px;top:694.9px;width:139.6px;height:17px">Winter Wonderland</div>
<div class="ct" style="left:599px;top:694.9px;width:140.6px;height:17px">mel miller</div>
<div class="ct" style="left:755px;top:694.9px;width:139.6px;height:17px">freddy@gmail.com</div>
<div class="ct" style="left:910px;top:694.9px;width:140.6px;height:17px">3213214321</div>
<div class="ct" style="left:1066px;top:694.9px;width:140.6px;height:17px">2,587.50</div>
<div class="ct" style="left:1222px;top:694.9px;width:139.6px;height:17px">1,100.00</div>
<div class="ct" style="left:1377px;top:694.9px;width:140.6px;height:17px">0.00</div>
<div class="ct" style="left:1533px;top:694.9px;width:139.6px;height:17px">1,100.00</div>
<div class="ct" style="left:1688px;top:694.9px;width:140.6px;height:17px">1,487.50</div>
<div class="kb" style="top:694.4px"><i></i><i></i><i></i></div>
<div class="ct" style="left:238px;top:726.9px;width:40.6px;height:17px">5163</div>
<div class="ct" style="left:288px;top:726.9px;width:140.6px;height:17px">24 Oct 2024</div>
<div class="ct" style="left:444px;top:726.9px;width:139.6px;height:17px">Wingate Wedding #2</div>
<div class="ct" style="left:1066px;top:726.9px;width:140.6px;height:17px">6,140.00</div>
<div class="ct" style="left:1222px;top:726.9px;width:139.6px;height:17px">6,317.00</div>
<div class="ct" style="left:1377px;top:726.9px;width:140.6px;height:17px">5,963.00</div>
<div class="ct" style="left:1533px;top:726.9px;width:139.6px;height:17px">177.00</div>
<div class="ct" style="left:1688px;top:726.9px;width:140.6px;height:17px">0.00</div>
<div class="kb" style="top:726.4px"><i></i><i></i><i></i></div>
<div class="ct" style="left:238px;top:758.9px;width:40.6px;height:17px">5146</div>
<div class="ct" style="left:288px;top:758.9px;width:140.6px;height:17px">16 Oct 2024</div>
<div class="ct" style="left:444px;top:758.9px;width:139.6px;height:17px">Wingate Test Banquet</div>
<div class="ct" style="left:1066px;top:758.9px;width:140.6px;height:17px">1,300.50</div>
<div class="ct" style="left:1222px;top:758.9px;width:139.6px;height:17px">1,300.50</div>
<div class="ct" style="left:1377px;top:758.9px;width:140.6px;height:17px">1,306.00</div>
<div class="ct" style="left:1533px;top:758.9px;width:139.6px;height:17px">-5.50</div>
<div class="ct" style="left:1688px;top:758.9px;width:140.6px;height:17px">0.00</div>
<div class="kb" style="top:758.4px"><i></i><i></i><i></i></div>
<div class="ct" style="left:238px;top:790.9px;width:40.6px;height:17px">5145</div>
<div class="ct" style="left:288px;top:790.9px;width:140.6px;height:17px">10 Oct 2024</div>
<div class="ct" style="left:444px;top:790.9px;width:139.6px;height:17px">Test</div>
<div class="ct" style="left:1066px;top:790.9px;width:140.6px;height:17px">2,601.00</div>
<div class="ct" style="left:1222px;top:790.9px;width:139.6px;height:17px">2,612.00</div>
<div class="ct" style="left:1377px;top:790.9px;width:140.6px;height:17px">2,612.00</div>
<div class="ct" style="left:1533px;top:790.9px;width:139.6px;height:17px">0.00</div>
<div class="ct" style="left:1688px;top:790.9px;width:140.6px;height:17px">-11.00</div>
<div class="kb" style="top:790.4px"><i></i><i></i><i></i></div>
<div class="ct" style="left:238px;top:822.9px;width:40.6px;height:17px">5103</div>
<div class="ct" style="left:288px;top:822.9px;width:140.6px;height:17px">06 Sep 2024</div>
<div class="ct" style="left:444px;top:822.9px;width:139.6px;height:17px">Ryans Wedding</div>
<div class="ct" style="left:1066px;top:822.9px;width:140.6px;height:17px">275.00</div>
<div class="ct" style="left:1222px;top:822.9px;width:139.6px;height:17px">75.00</div>
<div class="ct" style="left:1377px;top:822.9px;width:140.6px;height:17px">275.00</div>
<div class="ct" style="left:1533px;top:822.9px;width:139.6px;height:17px">-200.00</div>
<div class="ct" style="left:1688px;top:822.9px;width:140.6px;height:17px">200.00</div>
<div class="kb" style="top:822.4px"><i></i><i></i><i></i></div>
<div class="ct" style="left:238px;top:854.9px;width:40.6px;height:17px">5117</div>
<div class="ct" style="left:288px;top:854.9px;width:140.6px;height:17px">31 Aug 2024</div>
<div class="ct" style="left:444px;top:854.9px;width:139.6px;height:17px">Smith Baby Shower</div>
<div class="ct" style="left:1066px;top:854.9px;width:140.6px;height:17px">0.00</div>
<div class="ct" style="left:1222px;top:854.9px;width:139.6px;height:17px">0.00</div>
<div class="ct" style="left:1377px;top:854.9px;width:140.6px;height:17px">0.00</div>
<div class="ct" style="left:1533px;top:854.9px;width:139.6px;height:17px">0.00</div>
<div class="ct" style="left:1688px;top:854.9px;width:140.6px;height:17px">0.00</div>
<div class="kb" style="top:854.4px"><i></i><i></i><i></i></div>
<div class="a" style="left:1902px;top:206px;width:16px;height:284px;background:#adabab;border-radius:4px 4px 7px 7px"></div>
<svg class="a" style="left:243px;top:901px" width="19" height="11"><path d="M0 10 L9 0 L18 10 Z" fill="#000"/></svg>
<div class="t" style="left:272px;top:900.5px;font-size:12.4px;font-weight:bold;transform:scaleX(.927);transform-origin:0 0">Total Pages : 7 | Page : 1</div>
<svg class="a" style="left:418px;top:901px" width="19" height="11"><path d="M0 0 L18 0 L9 10 Z" fill="#000"/></svg>
<svg class="a" style="left:1772px;top:896px" width="22" height="20" viewBox="0 0 22 20">
<path d="M0 2 L12 0 V20 L0 18 Z" fill="#1e7145"/><rect x="12" y="2" width="9" height="16" fill="#1e7145"/>
<g fill="#fff"><rect x="13" y="3.5" width="3" height="1.8"/><rect x="17" y="3.5" width="3" height="1.8"/><rect x="13" y="6.5" width="3" height="1.8"/><rect x="17" y="6.5" width="3" height="1.8"/><rect x="13" y="9.5" width="3" height="1.8"/><rect x="17" y="9.5" width="3" height="1.8"/><rect x="13" y="12.5" width="3" height="1.8"/><rect x="17" y="12.5" width="3" height="1.8"/><rect x="13" y="15.2" width="3" height="1.8"/><rect x="17" y="15.2" width="3" height="1.8"/></g>
<path d="M3.3 6 L5 6 L6 8.3 L7 6 L8.7 6 L6.9 10 L8.8 14 L7.1 14 L6 11.6 L4.9 14 L3.2 14 L5.1 10 Z" fill="#fff"/></svg>
<svg class="a" style="left:1821px;top:897px" width="21" height="20" viewBox="0 0 21 20">
<ellipse cx="7" cy="2.5" rx="7" ry="2.5" fill="#000"/>
<path d="M0 4.3 C0 6 3 7 7 7 C11 7 14 6 14 4.3 V7.5 C14 9 11 10 7 10 C3 10 0 9 0 7.5 Z" fill="#000"/>
<path d="M0 9.3 C0 11 3 12 7 12 C9 12 10 11.8 11 11.5 L9.8 14.8 C9 15 8 15 7 15 C3 15 0 14 0 12.5 Z" fill="#000"/>
<path d="M0 14.3 C0 16 3 17 7 17 L9 17 L9.3 19.5 C8.5 19.8 7.8 19.8 7 19.8 C3 19.8 0 18.8 0 17.3 Z" fill="#000"/>
<circle cx="15" cy="14" r="5.8" fill="#000" stroke="#fff" stroke-width="1"/>
<path d="M15 11 V16 M12.7 13.7 L15 16.2 L17.3 13.7" fill="none" stroke="#fff" stroke-width="1.5"/></svg>
<svg class="a" style="left:1866px;top:897px" width="21" height="20" viewBox="0 0 21 20">
<ellipse cx="7" cy="2.5" rx="7" ry="2.5" fill="#000"/>
<path d="M0 4.3 C0 6 3 7 7 7 C11 7 14 6 14 4.3 V7.5 C14 9 11 10 7 10 C3 10 0 9 0 7.5 Z" fill="#000"/>
<path d="M0 9.3 C0 11 3 12 7 12 C9 12 10 11.8 11 11.5 L9.8 14.8 C9 15 8 15 7 15 C3 15 0 14 0 12.5 Z" fill="#000"/>
<path d="M0 14.3 C0 16 3 17 7 17 L9 17 L9.3 19.5 C8.5 19.8 7.8 19.8 7 19.8 C3 19.8 0 18.8 0 17.3 Z" fill="#000"/>
<circle cx="15" cy="14" r="5.8" fill="#000" stroke="#fff" stroke-width="1"/>
<path d="M15 16.5 V11.5 M12.7 13.8 L15 11.3 L17.3 13.8" fill="none" stroke="#fff" stroke-width="1.5"/></svg>
<svg class="a" style="left:0;top:0" width="1916" height="300" viewBox="0 0 1916 300">
<defs><filter id="sh" x="-50%" y="-50%" width="200%" height="200%"><feDropShadow dx="1.5" dy="2" stdDeviation="1.5" flood-color="#000" flood-opacity=".35"/></filter></defs>
<g filter="url(#sh)" fill="#f84147">
<path d="M205.5 222 L189 242" stroke="#f84147" stroke-width="6.6" stroke-linecap="round"/>
<path d="M175 260.5 L180.2 235 L199.3 249.4 Z"/>
<path d="M1183.2 131.6 L1167 105" stroke="#f84147" stroke-width="7" stroke-linecap="round"/>
<path d="M1155.2 85.3 L1177.2 99.4 L1157 111.4 Z"/>
</g></svg>
</body></html>
